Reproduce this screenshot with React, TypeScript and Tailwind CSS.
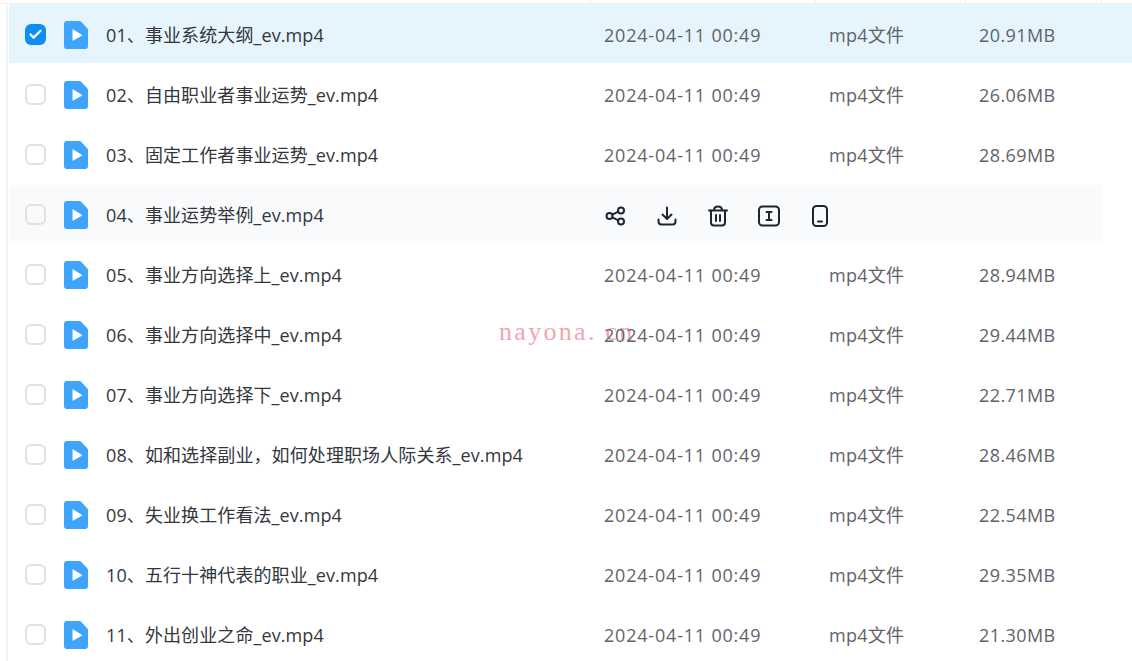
import { Check } from "lucide-react";

const files = [
  { name: "01、事业系统大纲_ev.mp4", size: "20.91MB" },
  { name: "02、自由职业者事业运势_ev.mp4", size: "26.06MB" },
  { name: "03、固定工作者事业运势_ev.mp4", size: "28.69MB" },
  { name: "04、事业运势举例_ev.mp4", size: "" },
  { name: "05、事业方向选择上_ev.mp4", size: "28.94MB" },
  { name: "06、事业方向选择中_ev.mp4", size: "29.44MB" },
  { name: "07、事业方向选择下_ev.mp4", size: "22.71MB" },
  { name: "08、如和选择副业，如何处理职场人际关系_ev.mp4", size: "28.46MB" },
  { name: "09、失业换工作看法_ev.mp4", size: "22.54MB" },
  { name: "10、五行十神代表的职业_ev.mp4", size: "29.35MB" },
  { name: "11、外出创业之命_ev.mp4", size: "21.30MB" },
];

const VideoIcon = () => (
  <svg width="24" height="28" viewBox="0 0 24 28" className="mt-[2px] shrink-0">
    <path d="M3 0h12.500a2 2 0 0 1 1.400.6l6.500 6.800a2 2 0 0 1 .6 1.400v16.200a3 3 0 0 1-3 3H3a3 3 0 0 1-3-3V3a3 3 0 0 1 3-3z" fill="#3fa4fb" />
    <path d="M8.500 8.500v10.500a.6.6 0 0 0 .9.500l8.300-4.800a.6.6 0 0 0 0-1l-8.300-5.200a.6.6 0 0 0-.9.500z" fill="#fff" />
  </svg>
);

const RowActions = () => (
  <div className="mt-[3px] flex items-center gap-[27px] text-[#1c2530]">
    <svg width="24" height="24" viewBox="0 0 24 24" fill="none" stroke="currentColor" strokeWidth="2">
      <circle cx="5.500" cy="12" r="3" />
      <circle cx="17" cy="6.500" r="3" />
      <circle cx="17" cy="17.500" r="3" />
      <path d="M8.300 10.700l6-3M8.300 13.300l6 3" />
    </svg>
    <svg width="24" height="24" viewBox="0 0 24 24" fill="none" stroke="currentColor" strokeWidth="2" strokeLinecap="round" strokeLinejoin="round">
      <path d="M12 3.500v11M7.500 10.500l4.500 4.500 4.500-4.500" />
      <path d="M3.500 15.500v2a3 3 0 0 0 3 3h11a3 3 0 0 0 3-3v-2" />
    </svg>
    <svg width="24" height="24" viewBox="0 0 24 24" fill="none" stroke="currentColor" strokeWidth="2" strokeLinecap="round" strokeLinejoin="round">
      <path d="M3 6.500h18M8 6c0-2 1.500-3.500 4-3.500s4 1.500 4 3.500" />
      <path d="M5 6.500v12a3 3 0 0 0 3 3h8a3 3 0 0 0 3-3v-12" />
      <path d="M10 11v6M14 11v6" />
    </svg>
    <svg width="24" height="24" viewBox="0 0 24 24" fill="none" stroke="currentColor" strokeWidth="2" strokeLinecap="round">
      <rect x="2" y="2.500" width="20" height="19" rx="3.500" />
      <path d="M9.500 8h5M9.500 16h5M12 8v8" />
    </svg>
    <svg width="24" height="24" viewBox="0 0 24 24" fill="none" stroke="currentColor" strokeWidth="2" strokeLinecap="round">
      <rect x="5" y="2" width="14" height="20" rx="3.500" />
      <path d="M10 17.500h4" />
    </svg>
  </div>
);

export default function App() {
  return (
    <div className="relative h-[661px] w-[1132px] overflow-hidden bg-white font-['Open_Sans','Noto_Sans_CJK_SC',sans-serif] text-[18px]">
      {/* 水印，压在文字下面 */}
      <div className="absolute left-[499px] top-[316px] whitespace-pre font-['Liberation_Serif',serif] text-[26px] leading-[32px] tracking-[2.3px] text-[#f2a5ae]">
        nayona. cn
      </div>

      {/* 表头残留的分隔线 */}
      <div className="relative flex h-1 border-b border-[#f0f0f0]">
        <div className="w-[591px] border-r border-[#eeeeee]" />
        <div className="w-[225px] border-r border-[#eeeeee]" />
        <div className="w-[150px] border-r border-[#eeeeee]" />
        <div className="w-[136px] border-r border-[#eeeeee]" />
      </div>

      <div className="relative ml-[6px] border-l-2 border-[#f4f4f4] pl-[1px]">
        {files.map((file, i) => {
          const selected = i === 0;
          const hovered = i === 3;
          return (
            <div key={file.name} className="flex h-[60px] items-center">
              <div
                className={`flex w-full items-center ${selected ? "h-[59px] self-start bg-[#e6f4fe] pt-[1px]" : "h-[58px]"} ${hovered ? "mr-[30px] bg-[#f9fafb]" : ""}`}
              >
                <div className="ml-[16px] mt-[1px] flex w-[39px] shrink-0">
                  {selected ? (
                    <div className="flex h-[21px] w-[21px] items-center justify-center rounded-[6px] bg-[#0c8ef5]">
                      <Check size={15} strokeWidth={3.500} className="text-white" />
                    </div>
                  ) : (
                    <div className="h-[21px] w-[21px] rounded-[6px] border-2 border-[#e1e1e4]" />
                  )}
                </div>
                <VideoIcon />
                <div className="ml-[18px] mt-[2px] w-[498px] shrink-0 truncate tracking-[0.1px] text-[#33373d]">{file.name}</div>
                {hovered ? (
                  <RowActions />
                ) : (
                  <>
                    <div className="mt-[2px] w-[225px] shrink-0 tracking-[0.8px] text-[#5f6369]">2024-04-11 00:49</div>
                    <div className="mt-[2px] w-[150px] shrink-0 tracking-[0.25px] text-[#5f6369]">mp4文件</div>
                    <div className="mt-[2px] shrink-0 tracking-[0.4px] text-[#5f6369]">{file.size}</div>
                  </>
                )}
              </div>
            </div>
          );
        })}
      </div>
    </div>
  );
}
